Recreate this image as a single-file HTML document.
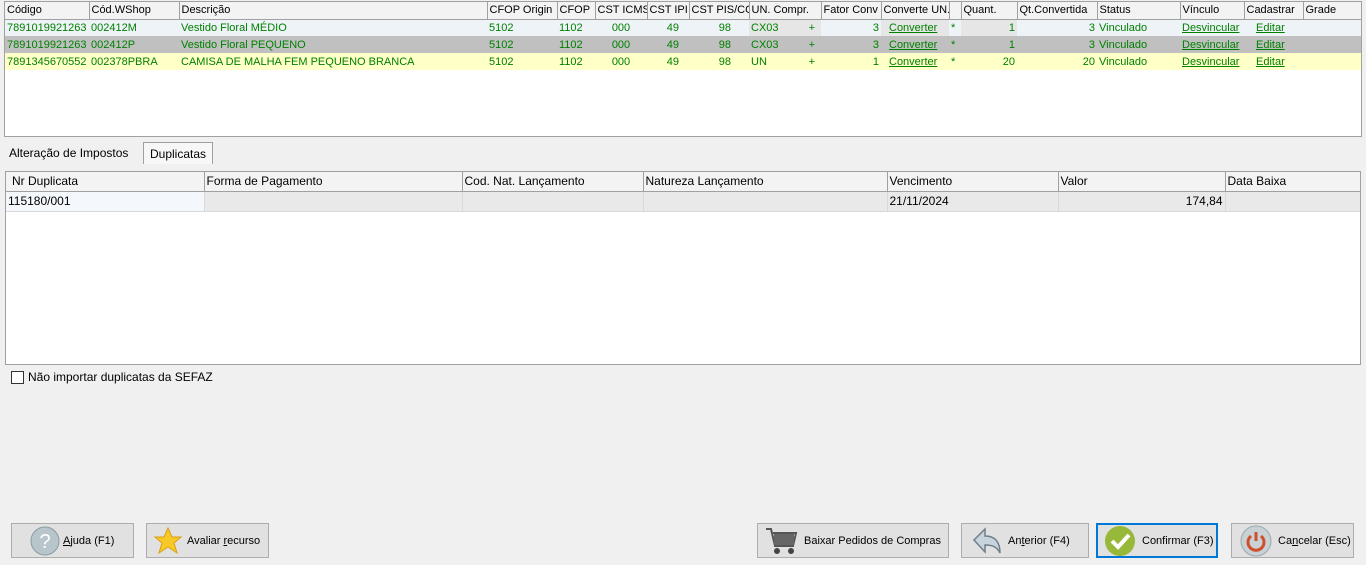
<!DOCTYPE html>
<html><head><meta charset="utf-8"><style>
*{box-sizing:border-box;margin:0;padding:0}
body{width:1366px;height:565px;background:#f0f0f0;font-family:"Liberation Sans",sans-serif;font-size:11px;color:#000;position:relative;overflow:hidden}
.abs{position:absolute}
table{border-collapse:collapse;table-layout:fixed}
td{white-space:nowrap;overflow:hidden;height:17px;padding:0 2px}
th{font-weight:normal;text-align:left;white-space:nowrap;overflow:hidden;border-right:1px solid #a0a0a0;border-bottom:1px solid #a0a0a0;padding:0 2px;background:#f3f3f3}
.g td{color:#008000}
.r1{background:#eef3f8}.r2{background:#c0c0c0}.r3{background:#ffffc8}
.lnk{text-decoration:underline;color:#008000}
.gr{background:#e6e6e6}
.btn{position:absolute;top:523px;height:35px;background:#e1e1e1;border:1px solid #adadad;display:flex;align-items:center;font-size:11px}
.btn svg{margin:0 6px 0 6px}
</style></head><body>
<div class="abs" style="left:4px;top:1px;width:1358px;height:136px;background:#fff;border:1px solid #a0a0a0">
<table class="g" style="width:1356px;font-size:11px">
<colgroup><col style="width:84px"><col style="width:90px"><col style="width:308px"><col style="width:70px"><col style="width:38px"><col style="width:52px"><col style="width:42px"><col style="width:60px"><col style="width:72px"><col style="width:60px"><col style="width:68px"><col style="width:12px"><col style="width:56px"><col style="width:80px"><col style="width:83px"><col style="width:64px"><col style="width:59px"><col style="width:58px"></colgroup>
<tr style="height:17px"><th>Código</th><th>Cód.WShop</th><th>Descrição</th><th>CFOP Origin</th><th>CFOP</th><th>CST ICMS</th><th>CST IPI</th><th>CST PIS/CO</th><th>UN. Compr.</th><th>Fator Conv</th><th>Converte UN.</th><th></th><th>Quant.</th><th>Qt.Convertida</th><th>Status</th><th>Vínculo</th><th>Cadastrar</th><th>Grade</th></tr>
<tr class="r1"><td>7891019921263</td><td>002412M</td><td>Vestido Floral MÉDIO</td><td>5102</td><td>1102</td><td style="text-align:center">000</td><td style="text-align:right;padding-right:10px">49</td><td style="text-align:right;padding-right:18px">98</td><td class="gr">CX03<span style="float:right;padding-right:4px">+</span></td><td style="text-align:right">3</td><td class="gr" style="padding-left:8px"><span class="lnk">Converter</span></td><td>*</td><td class="gr" style="text-align:right">1</td><td style="text-align:right">3</td><td>Vinculado</td><td style="text-decoration:underline">Desvincular</td><td style="padding-left:12px"><span class="lnk">Editar</span></td><td></td></tr>
<tr class="r2"><td>7891019921263</td><td>002412P</td><td>Vestido Floral PEQUENO</td><td>5102</td><td>1102</td><td style="text-align:center">000</td><td style="text-align:right;padding-right:10px">49</td><td style="text-align:right;padding-right:18px">98</td><td>CX03<span style="float:right;padding-right:4px">+</span></td><td style="text-align:right">3</td><td style="padding-left:8px"><span class="lnk">Converter</span></td><td>*</td><td style="text-align:right">1</td><td style="text-align:right">3</td><td>Vinculado</td><td style="text-decoration:underline">Desvincular</td><td style="padding-left:12px"><span class="lnk">Editar</span></td><td></td></tr>
<tr class="r3"><td>7891345670552</td><td>002378PBRA</td><td>CAMISA DE MALHA FEM PEQUENO BRANCA</td><td>5102</td><td>1102</td><td style="text-align:center">000</td><td style="text-align:right;padding-right:10px">49</td><td style="text-align:right;padding-right:18px">98</td><td>UN<span style="float:right;padding-right:4px">+</span></td><td style="text-align:right">1</td><td style="padding-left:8px"><span class="lnk">Converter</span></td><td>*</td><td style="text-align:right">20</td><td style="text-align:right">20</td><td>Vinculado</td><td style="text-decoration:underline">Desvincular</td><td style="padding-left:12px"><span class="lnk">Editar</span></td><td></td></tr>
</table></div>
<div class="abs" style="left:9px;top:146px;font-size:12px">Alteração de Impostos</div>
<div class="abs" style="left:143px;top:142px;width:70px;height:22px;border:1px solid #a0a0a0;border-bottom:none;background:#f7f7f7;padding:4px 0 0 6px;font-size:12px">Duplicatas</div>
<div class="abs" style="left:5px;top:171px;width:1356px;height:194px;background:#fff;border:1px solid #a0a0a0">
<table style="width:1354px;font-size:12px">
<colgroup><col style="width:198px"><col style="width:258px"><col style="width:181px"><col style="width:244px"><col style="width:171px"><col style="width:167px"><col style="width:135px"></colgroup>
<tr style="height:19px"><th style="padding-left:6px">Nr Duplicata</th><th>Forma de Pagamento</th><th>Cod. Nat. Lançamento</th><th>Natureza Lançamento</th><th>Vencimento</th><th>Valor</th><th>Data Baixa</th></tr>
<tr style="height:20px;background:#e9e9e9"><td style="background:#f4f7fb;border-right:1px solid #d8d8d8;border-bottom:1px solid #d8d8d8">115180/001</td><td style="border-right:1px solid #d8d8d8;border-bottom:1px solid #d8d8d8"></td><td style="border-right:1px solid #d8d8d8;border-bottom:1px solid #d8d8d8"></td><td style="border-right:1px solid #d8d8d8;border-bottom:1px solid #d8d8d8"></td><td style="border-right:1px solid #d8d8d8;border-bottom:1px solid #d8d8d8">21/11/2024</td><td style="text-align:right;border-right:1px solid #d8d8d8;border-bottom:1px solid #d8d8d8">174,84</td><td style="border-bottom:1px solid #d8d8d8"></td></tr>
</table></div>
<div class="abs" style="left:11px;top:371px;width:13px;height:13px;border:1px solid #333;background:#fff"></div>
<div class="abs" style="left:28px;top:370px;font-size:12px">Não importar duplicatas da SEFAZ</div>

<div class="btn" style="left:11px;width:123px"><svg width="32" height="32" viewBox="0 0 32 32" style="margin-left:17px"><circle cx="16" cy="16" r="14" fill="#b8c6cc" stroke="#8c9ca3"/><text x="16" y="23" font-size="20" fill="#fff" text-anchor="middle" font-family="Liberation Sans">?</text></svg><span style="margin-left:-4px"><u>A</u>juda (F1)</span></div>
<div class="btn" style="left:146px;width:123px"><svg width="30" height="30" viewBox="0 0 30 30" style="margin-left:6px;margin-right:4px"><polygon points="15,2 19,11 28,11 21,17 24,27 15,21 6,27 9,17 2,11 11,11" fill="#f7c928" stroke="#d9a010"/></svg><span>Avaliar <u>r</u>ecurso</span></div>
<div class="btn" style="left:757px;width:192px"><svg width="34" height="30" viewBox="0 0 34 30"><path d="M2 3h5l4 17h18l3-13H9" fill="none" stroke="#555" stroke-width="2"/><rect x="10" y="8" width="20" height="11" fill="#666"/><circle cx="13" cy="25" r="3" fill="#444"/><circle cx="27" cy="25" r="3" fill="#444"/></svg><span>Baixar Pedidos de Compras</span></div>
<div class="btn" style="left:961px;width:128px"><svg width="30" height="28" viewBox="0 0 30 28" style="margin-left:10px"><path d="M2 13L13 2v7c10 0 15 6 15 17c-3-6-7-8-15-8v7z" fill="#c9d3dc" stroke="#6e7e8a" stroke-width="1.5"/></svg><span>An<u>t</u>erior (F4)</span></div>
<div class="btn" style="left:1096px;width:122px;border:2px solid #0078d7"><svg width="32" height="32" viewBox="0 0 32 32" style="margin-left:6px"><circle cx="16" cy="16" r="15" fill="#98b83a"/><path d="M8 16l6 6 11-12" fill="none" stroke="#fff" stroke-width="4"/></svg><span>Confirmar (F3)</span></div>
<div class="btn" style="left:1231px;width:123px"><svg width="32" height="32" viewBox="0 0 32 32" style="margin-left:8px"><circle cx="16" cy="16" r="15" fill="#c7d1d6" stroke="#9aa8ae"/><path d="M11 11a8 8 0 1 0 10 0" fill="none" stroke="#d0502a" stroke-width="3"/><path d="M16 7v9" stroke="#d0502a" stroke-width="3"/></svg><span>Ca<u>n</u>celar (Esc)</span></div>
</body></html>
